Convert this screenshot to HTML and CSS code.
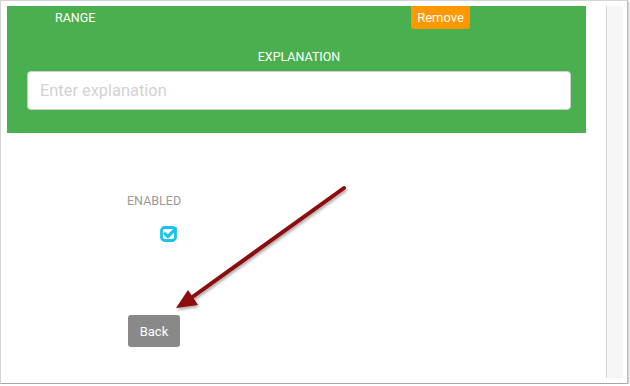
FILE: index.html
```html
<!DOCTYPE html>
<html lang="en">

<head>
    <meta charset="UTF-8">
    <meta name="viewport" content="width=device-width, initial-scale=1.0">
    <title>Rule Settings</title>
    <link rel="stylesheet" href="styles.css">
</head>

<body>
    <div class="frame">
        <div class="main">
            <div class="range-panel">
                <div class="panel-top">
                    <span class="range-label">RANGE</span>
                    <button class="btn-remove">Remove</button>
                </div>
                <label class="field-label" for="explanation">EXPLANATION</label>
                <input type="text" id="explanation" class="field-input" placeholder="Enter explanation">
            </div>

            <div class="enabled-label">ENABLED</div>
            <div class="enabled-check">
                <svg width="18" height="17" viewBox="0 0 18 17">
                    <rect x="1.5" y="2.5" width="14" height="13" rx="3.2" fill="none" stroke="#19c1ee" stroke-width="2.8" />
                    <path d="M4.8 8.6 L7.9 11.6 L15.6 3.6" fill="none" stroke="#19c1ee" stroke-width="3" stroke-linecap="round" stroke-linejoin="round" />
                </svg>
            </div>

            <button class="btn-back">Back</button>
        </div>
        <div class="side-strip"></div>

        <!-- annotation arrow -->
        <svg class="annotation" width="628" height="384" viewBox="0 0 628 384">
            <defs>
                <filter id="shadow" x="-20%" y="-20%" width="140%" height="140%">
                    <feDropShadow dx="1" dy="2" stdDeviation="1.5" flood-color="#000" flood-opacity="0.35" />
                </filter>
            </defs>
            <g filter="url(#shadow)">
                <line x1="344" y1="188" x2="191" y2="298" stroke="#8c0a0a" stroke-width="4" stroke-linecap="round" />
                <polygon points="176,308 188,290 198,305" fill="#8c0a0a" />
            </g>
        </svg>
    </div>
</body>

</html>
```

FILE: styles.css
```css
body {
    margin: 0;
    padding: 0;
    font-family: Roboto, "Liberation Sans", sans-serif;
    background-color: #fff;
}

.frame {
    position: relative;
    box-sizing: border-box;
    width: 628px;
    height: 384px;
    border: 1px solid #d4d4d4;
    border-bottom-color: #a8a8a8;
    border-right-color: #bcbcbc;
    box-shadow: 1px 1px 2px rgba(0, 0, 0, 0.25);
    padding: 5px 4px 5px 6px;
    display: flex;
    background-color: #fff;
}

.main {
    width: 579px;
    margin-right: 20px;
}

.range-panel {
    background-color: #4aaf4e;
    padding: 0 15px 23px 20px;
    color: #fff;
}

.panel-top {
    display: flex;
    height: 23px;
    align-items: center;
}

.range-label {
    flex: 0 0 384px;
    box-sizing: border-box;
    padding-left: 28px;
    font-size: 12.5px;
    line-height: 23px;
}

.btn-remove {
    height: 23px;
    width: 59px;
    padding: 0;
    border: none;
    border-radius: 0 0 3px 3px;
    background-color: #ff9800;
    color: #fff;
    font-family: Roboto, "Liberation Sans", sans-serif;
    font-size: 13px;
}

.field-label {
    display: block;
    margin-top: 20px;
    text-align: center;
    font-size: 12.5px;
    line-height: 16px;
}

.field-input {
    display: block;
    box-sizing: border-box;
    width: 544px;
    height: 39px;
    margin-top: 6px;
    padding: 0 12px;
    border: 1px solid #cfcfcf;
    border-radius: 4px;
    font-family: Roboto, "Liberation Sans", sans-serif;
    font-size: 16.4px;
    outline: none;
}

.field-input::placeholder {
    color: #d2d2d2;
}

.enabled-label {
    margin: 60px 0 0 120px;
    font-size: 12.5px;
    line-height: 16px;
    color: #9a9a9a;
}

.enabled-check {
    margin: 16px 0 0 153px;
    height: 17px;
}

.enabled-check svg {
    display: block;
}

.btn-back {
    display: block;
    margin: 73px 0 0 121px;
    width: 52px;
    height: 32px;
    padding: 0;
    border: none;
    border-radius: 3px;
    background-color: #898989;
    color: #fff;
    font-family: Roboto, "Liberation Sans", sans-serif;
    font-size: 13px;
}

.side-strip {
    width: 17px;
    background-color: #f6f6f6;
    border-left: 1px solid #d8d8d8;
    box-sizing: border-box;
}

.annotation {
    position: absolute;
    left: -1px;
    top: -1px;
    pointer-events: none;
}
```
